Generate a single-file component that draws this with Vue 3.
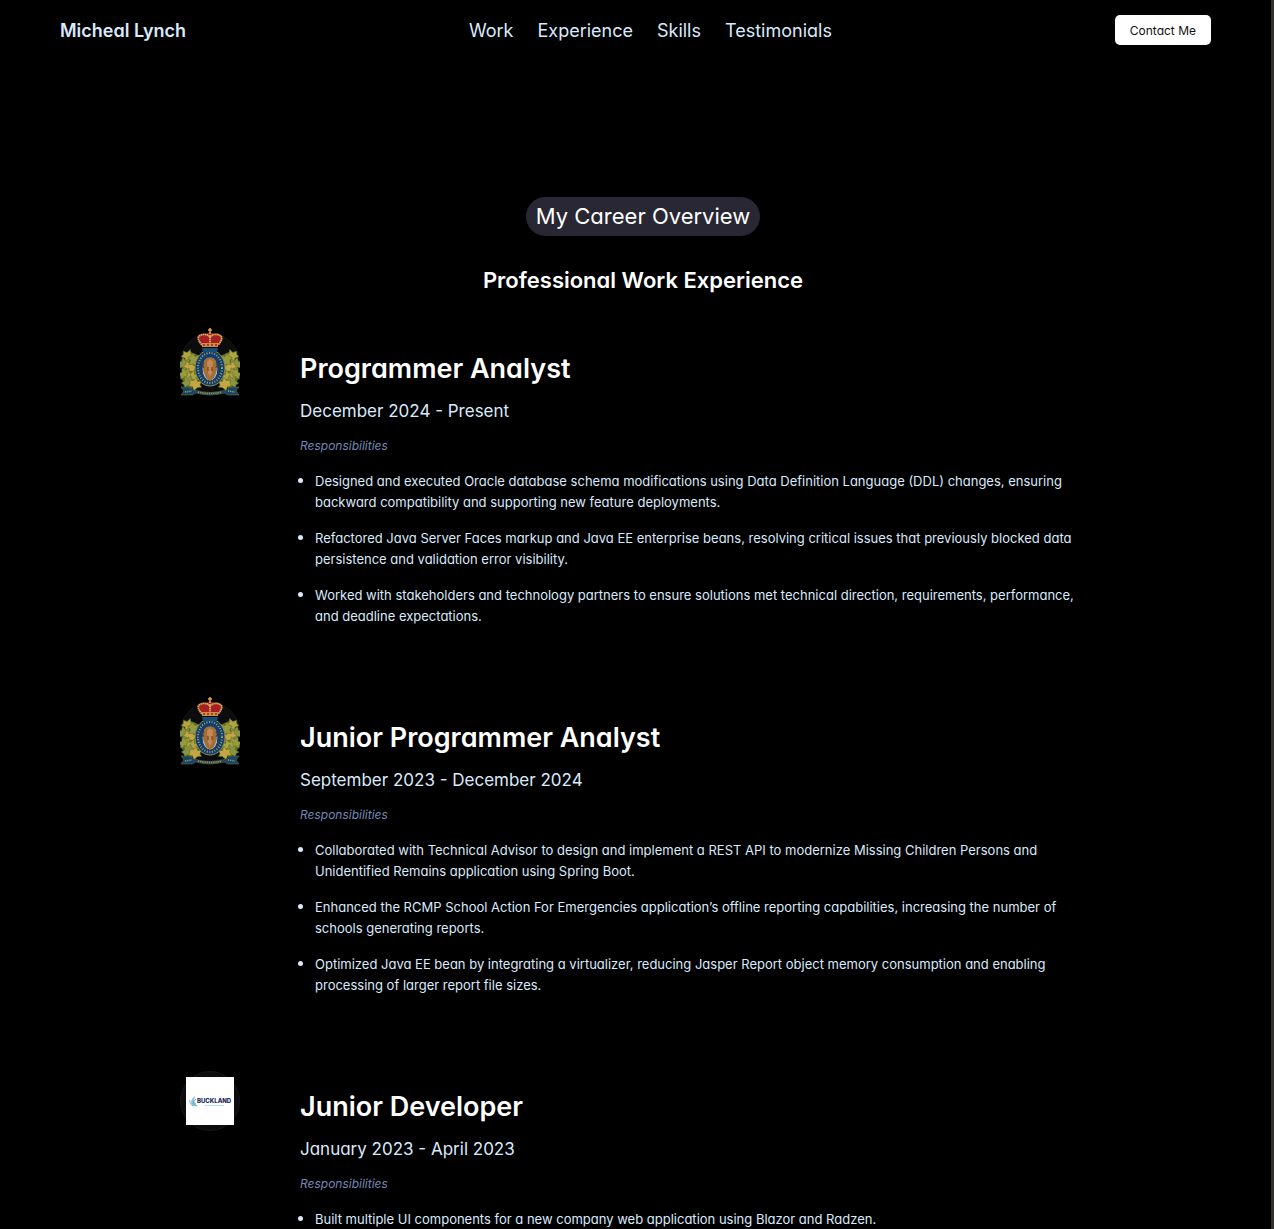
<script setup>
const links = ['Work', 'Experience', 'Skills', 'Testimonials']

const jobs = [
  {
    title: 'Programmer Analyst',
    dates: 'December 2024 - Present',
    logo: 'crest',
    duties: [
      'Designed and executed Oracle database schema modifications using Data Definition Language (DDL) changes, ensuring backward compatibility and supporting new feature deployments.',
      'Refactored Java Server Faces markup and Java EE enterprise beans, resolving critical issues that previously blocked data persistence and validation error visibility.',
      'Worked with stakeholders and technology partners to ensure solutions met technical direction, requirements, performance, and deadline expectations.',
    ],
  },
  {
    title: 'Junior Programmer Analyst',
    dates: 'September 2023 - December 2024',
    logo: 'crest',
    duties: [
      'Collaborated with Technical Advisor to design and implement a REST API to modernize Missing Children Persons and Unidentified Remains application using Spring Boot.',
      'Enhanced the RCMP School Action For Emergencies application’s offline reporting capabilities, increasing the number of schools generating reports.',
      'Optimized Java EE bean by integrating a virtualizer, reducing Jasper Report object memory consumption and enabling processing of larger report file sizes.',
    ],
  },
  {
    title: 'Junior Developer',
    dates: 'January 2023 - April 2023',
    logo: 'buckland',
    duties: ['Built multiple UI components for a new company web application using Blazor and Radzen.'],
  },
]

const leaves = [
  [8, 28, 20], [4, 36, -10], [10, 39, 30], [5, 46, -25], [12, 49, 15], [8, 54, -35], [15, 56, 10], [14, 32, 50],
]
</script>

<template>
  <div class="page">
    <header class="bar">
      <a href="#" class="brand">Micheal Lynch</a>
      <nav class="links">
        <a v-for="l in links" :key="l" :href="'#' + l.toLowerCase()">{{ l }}</a>
      </nav>
      <button type="button" class="contact">Contact Me</button>
    </header>

    <main class="career">
      <p class="pill">My Career Overview</p>
      <h2>Professional Work Experience</h2>

      <article v-for="job in jobs" :key="job.title" class="job">
        <div class="logo">
          <svg v-if="job.logo === 'crest'" class="crest" viewBox="0 0 60 70" aria-hidden="true">
            <g v-for="side in [1, -1]" :key="side" :transform="side === 1 ? '' : 'translate(60 0) scale(-1 1)'">
              <path d="M11 24 L20 28 L18 60 L8 59 L2 52 L3 34Z" fill="#5f6b28" />
              <path
                v-for="(f, i) in leaves"
                :key="i"
                :transform="`translate(${f[0]} ${f[1]}) rotate(${f[2]})`"
                d="M0-7 L2-3 L6-4 L5 0 L7 2 L3 3 L0 7 L-2 3 L-6 3 L-5 0 L-6-3 L-2-3Z"
                :fill="['#b0a53d', '#8a9340', '#c4a742', '#989a3e'][i % 4]"
                stroke="#5c6a28"
                stroke-width="0.5"
              />
            </g>
            <ellipse cx="30" cy="40" rx="15" ry="18" fill="#123f70" stroke="#8f8d4b" stroke-width="1" />
            <ellipse cx="30" cy="40" rx="12" ry="15" fill="none" stroke="#a99d54" stroke-width="2" stroke-dasharray="1 1.6" />
            <ellipse cx="30" cy="41" rx="8" ry="12" fill="#9cc0d6" stroke="#173a62" stroke-width="1" />
            <path d="M24 33 Q27 28 30 30 Q33 28 36 33 L37 42 L34 50 L30 53 L26 50 L23 42Z" fill="#a66d34" />
            <path d="M27 34 L30 31 L33 34 L32 45 L30 49 L28 45Z" fill="#c18a55" />
            <path d="M24 35 Q22 37 24 40 M36 35 Q38 37 36 40 M28 39 L28 43 M32 39 L32 43" fill="none" stroke="#603719" />
            <path d="M22 20 H38 L37 24 H23Z" fill="#174c77" />
            <path d="M21 17 L18 10 Q19 5 26 6 L30 4 L34 6 Q41 5 42 10 L39 17Z" fill="#a61f27" />
            <path d="M22 17 Q15 9 21 7 Q26 5 30 9 Q34 5 39 7 Q45 9 38 17 M30 7 V16" fill="none" stroke="#d8aa55" stroke-width="1.8" stroke-dasharray="1.6 0.4" />
            <path d="M30 0 V6 M28 2 H32" stroke="#d6a449" stroke-width="1.6" />
            <path d="M22 15 H38 V19 H22Z" fill="#ca9043" />
            <path d="M23 17 H37" stroke="#a61f27" stroke-width="1.4" stroke-dasharray="2 2" />
            <path d="M1 59 L9 59 L14 62 Q30 67 46 62 L51 59 L59 59 L56 63 L59 67 L48 67 L44 65 Q30 69 16 65 L12 67 L1 67 L4 63Z" fill="#174568" stroke="#63713e" stroke-width="0.6" />
            <path d="M5 64 L12 63 M18 64 Q30 67 42 64 M48 63 L55 64" fill="none" stroke="#a69b52" stroke-width="1.6" stroke-dasharray="1.2 1" />
          </svg>
          <svg v-else class="company" viewBox="0 0 48 48" role="img" aria-label="Buckland">
            <rect width="48" height="48" fill="#fff" />
            <path d="M9 19 Q3 23 6 28 Q8 30 12 29 Q7 27 9 19Z" fill="#8fc9df" />
            <path d="M4 23 Q3 28 8 29 M10 22 L7 25 L10 27 M6 26 L11 29" fill="none" stroke="#5ca8c9" stroke-width="0.8" />
            <text x="11" y="26" font-size="6" font-weight="800" fill="#20285c">BUCKLAND</text>
            <path d="M19 28.500 H38" stroke="#a8d4e5" stroke-width="1" stroke-dasharray="2 0.5" />
          </svg>
        </div>
        <div class="detail">
          <h3>{{ job.title }}</h3>
          <p class="dates">{{ job.dates }}</p>
          <p class="label">Responsibilities</p>
          <ul>
            <li v-for="d in job.duties" :key="d">{{ d }}</li>
          </ul>
        </div>
      </article>
    </main>
  </div>
</template>

<style>
body {
  margin: 0;
  background: #000;
}
</style>

<style scoped>
.page {
  box-sizing: border-box;
  height: 100vh;
  overflow: hidden;
  border-right: 3px solid #33302d;
  background: #000;
  color: #d9eafd;
  font-family: Inter, "Liberation Sans", sans-serif;
  font-feature-settings: "cv11";
}
.bar {
  display: flex;
  align-items: center;
  justify-content: space-between;
  height: 60px;
  padding: 0 60px;
}
a {
  color: inherit;
  text-decoration: none;
}
.brand {
  font-size: 18px;
  font-weight: 600;
}
.links {
  display: flex;
  gap: 24px;
  font-size: 18px;
}
.contact {
  height: 30px;
  padding: 0 15px;
  border: 0;
  border-radius: 5px;
  background: #fff;
  color: #111;
  font: inherit;
  font-size: 12px;
}
.career {
  padding: 137px 165px 0 180px;
}
.pill {
  width: fit-content;
  margin: 0 auto 26px;
  padding: 0 10px;
  border-radius: 20px;
  background: #292733;
  color: #fff;
  font-size: 22px;
  line-height: 39px;
}
h2 {
  margin: 0 0 35px;
  color: #fff;
  font-size: 22px;
  font-weight: 600;
  line-height: 36px;
  text-align: center;
}
.job {
  display: flex;
  gap: 60px;
  margin-bottom: 75px;
}
.logo {
  box-sizing: border-box;
  display: flex;
  flex: none;
  align-items: center;
  justify-content: center;
  width: 60px;
  height: 60px;
  border: 1px solid #17171a;
  border-radius: 50%;
  background: #0c0c0e;
}
.crest {
  flex: none;
  width: 60px;
  height: 70px;
}
.company {
  flex: none;
  width: 48px;
  height: 48px;
}
.detail {
  flex: 1;
  padding-top: 15px;
}
h3 {
  margin: 0 0 7px;
  color: #fff;
  font-size: 27px;
  font-weight: 600;
  line-height: 42px;
}
.dates {
  margin: 0 0 11px;
  font-size: 17px;
  line-height: 28px;
}
.label {
  margin: 0 0 14px;
  color: #7189b5;
  font-size: 12px;
  font-style: italic;
  line-height: 20px;
}
ul {
  display: flex;
  flex-direction: column;
  gap: 14px;
  margin: 0;
  padding: 0 15px;
  font-size: 13px;
  line-height: 21px;
}
li::marker {
  font-size: 15px;
}
</style>
